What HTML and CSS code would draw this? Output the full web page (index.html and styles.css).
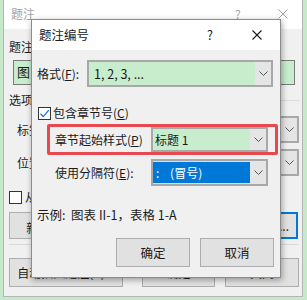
FILE: index.html
```html
<!DOCTYPE html>
<html lang="zh-CN">
<head>
<meta charset="utf-8">
<title>题注编号</title>
<link rel="stylesheet" href="styles.css">
</head>
<body>
<div class="desk">
  <div class="win back">
    <div class="tbar">
      <span class="ttl">题注</span>
      <span class="help">?</span>
      <svg class="close" width="10" height="10" viewBox="0 0 10 10"><path d="M0.5 0.5L9.5 9.5M9.5 0.5L0.5 9.5" stroke="#a0a0a0" stroke-width="1"/></svg>
    </div>
    <div class="bbody">
      <div class="blabel">题注</div>
      <div class="binput">图</div>
      <div class="bgroup"><span>选项</span><i class="gline"></i></div>
      <div class="brow"><span class="blab">标签</span><div class="bcombo"><span class="bval"></span><span class="arr"><svg width="9" height="5" viewBox="0 0 9 5"><path d="M0.5 0.5L4.5 4.5L8.5 0.5" fill="none" stroke="#555" stroke-width="1"/></svg></span></div></div>
      <div class="brow r2"><span class="blab">位置</span><div class="bcombo"><span class="bval"></span><span class="arr"><svg width="9" height="5" viewBox="0 0 9 5"><path d="M0.5 0.5L4.5 4.5L8.5 0.5" fill="none" stroke="#555" stroke-width="1"/></svg></span></div></div>
      <div class="bcheck"><span class="cb"></span><span>从题注中排除标签(E)</span></div>
      <div class="bbtns">
        <span class="btn b1">新建标签(N)...</span>
        <span class="btn b2"></span>
        <span class="btn b3 focus">编号(U)...</span>
      </div>
      <div class="sep"></div>
      <div class="bbtns2">
        <span class="btn c1">自动插入题注(A)...</span>
        <span class="btn c2">确定</span>
        <span class="btn c3">关闭</span>
      </div>
    </div>
  </div>

  <div class="win front">
    <div class="tbar ftbar">
      <span class="ttl fttl">题注编号</span>
      <span class="help fhelp">?</span>
      <svg class="close fclose" width="10" height="10" viewBox="0 0 10 10"><path d="M0.5 0.5L9.5 9.5M9.5 0.5L0.5 9.5" stroke="#1a1a1a" stroke-width="1.1"/></svg>
    </div>
    <div class="fbody">
      <div class="row1">
        <span class="lab1">格式(<u>F</u>):</span>
        <div class="combo c-fmt"><span class="val">1, 2, 3, ...</span><span class="arr"><svg width="9" height="5" viewBox="0 0 9 5"><path d="M0.5 0.5L4.5 4.5L8.5 0.5" fill="none" stroke="#555" stroke-width="1"/></svg></span></div>
      </div>
      <div class="chk">
        <span class="cbx"><svg width="11" height="11" viewBox="0 0 11 11"><path d="M1.5 5.8L4.3 8.6L9.8 2.2" fill="none" stroke="#1a73d9" stroke-width="1.3"/></svg></span>
        <span>包含章节号(<u>C</u>)</span>
      </div>
      <div class="redbox">
        <span class="lab2">章节起始样式(<u>P</u>)</span>
        <div class="combo c-sty"><span class="val">标题 1</span><span class="arr"><svg width="9" height="5" viewBox="0 0 9 5"><path d="M0.5 0.5L4.5 4.5L8.5 0.5" fill="none" stroke="#555" stroke-width="1"/></svg></span></div>
      </div>
      <div class="row3">
        <span class="lab2">使用分隔符(<u>E</u>):</span>
        <div class="combo c-sep"><span class="val sel">:&nbsp;&nbsp;&nbsp;&nbsp;(冒号)</span><span class="arr"><svg width="9" height="5" viewBox="0 0 9 5"><path d="M0.5 0.5L4.5 4.5L8.5 0.5" fill="none" stroke="#555" stroke-width="1"/></svg></span></div>
      </div>
      <div class="example"><span class="extext">示例:&nbsp;&nbsp;图表 II-1，表格 1-A</span></div>
      <div class="fbtns">
        <span class="btn fb">确定</span>
        <span class="btn fb">取消</span>
      </div>
    </div>
  </div>
</div>
</body>
</html>
```
FILE: styles.css
```css
* { box-sizing: border-box; }
html, body { margin: 0; padding: 0; }
body {
  width: 307px;
  height: 300px;
  overflow: hidden;
  background: #c7e8cb;
  font-family: "Noto Sans CJK SC", "Noto Sans", sans-serif;
  font-size: 12px;
  color: #1a1a1a;
}
u { text-decoration: underline; text-underline-offset: 1px; }
.desk { position: relative; width: 307px; height: 300px; }
.win { position: absolute; background: #f0f0f0; }

/* back dialog */
.back {
  left: 3px; top: -3px; width: 300px; height: 300px;
  border: 1px solid #b5b5b5;
  overflow: hidden;
}
.tbar {
  display: flex; align-items: center;
  background: #ffffff;
}
.back .tbar { height: 31px; padding-left: 7px; }
.ttl { flex: 1; line-height: 14px; }
.back .ttl { color: #a3a3a3; }
.back .help { color: #a3a3a3; width: 12px; margin-right: 31px; line-height: 14px; }
.back .close { margin-right: 14px; }

.bbody { padding: 0 0 0 5px; display: flex; flex-direction: column; }
.blabel { margin-top: 11px; height: 14px; line-height: 14px; }
.binput {
  margin: 6px 0 0 4px; width: 282px; height: 25px;
  border: 1px solid #7a7a7a; background: #c7edcc;
  padding-left: 3px; line-height: 22px; font-size: 13px;
}
.bgroup { display: flex; align-items: center; margin-top: 8px; height: 14px; line-height: 14px; }
.gline { flex: 1; height: 1px; background: #dcdcdc; margin-left: 6px; margin-right: 2px; }
.brow { display: flex; align-items: center; margin-top: 9px; padding-left: 8px; }
.brow.r2 { margin-top: 6px; }
.blab { width: 60px; line-height: 14px; }
.bcombo {
  display: flex; width: 216px; height: 27px; margin-left: auto; margin-right: 3px;
  border: 2px solid #a8a8a8; background: #c7edcc;
}
.bval { flex: 1; }
.arr { width: 16px; background: #e5e5e5; display: flex; align-items: center; justify-content: center; }
.bcheck { display: flex; align-items: center; margin-top: 14px; height: 14px; line-height: 14px; }
.cb { width: 13px; height: 13px; border: 1px solid #333; background: #fff; margin-right: 3px; }
.bbtns { display: flex; margin-top: 8px; gap: 8px; }
.btn {
  display: flex; align-items: center; justify-content: center;
  background: #e1e1e1; border: 1px solid #adadad; line-height: 13px; white-space: nowrap;
}
.bbtns .btn { height: 27px; }
.b1 { width: 110px; padding-top: 4px; line-height: 12px; }
.b2 { width: 60px; }
.b3 { width: 105px; margin-left: auto; margin-right: 4px; justify-content: flex-end; padding-right: 7px; }
.focus { border: 2px solid #0078d7; }
.sep { height: 1px; background: #d9d9d9; margin: 5px 4px 0 0; }
.bbtns2 { display: flex; margin-top: 13px; }
.bbtns2 .btn { height: 29px; }
.c1 { width: 114px; }
.c2 { width: 73px; margin-left: 19px; }
.c3 { width: 74px; margin-left: 10px; }

/* front dialog */
.front {
  left: 31px; top: 19px; width: 250px; height: 259px;
  border: 1px solid #8c8c8c;
  box-shadow: 1px 2px 6px rgba(0,0,0,0.35);
}
.ftbar { height: 30px; padding-left: 7px; }
.fttl { line-height: 14px; font-size: 12.5px; }
.fhelp { width: 10px; margin-right: 35px; line-height: 14px; font-size: 12.5px; }
.fclose { margin-right: 18px; }

.fbody { display: flex; flex-direction: column; padding-left: 5px; }
.row1 { display: flex; align-items: center; margin-top: 10px; }
.lab1 { width: 50px; line-height: 14px; }
.combo {
  display: flex; height: 27px;
  border: 2px solid #a8a8a8; background: #c7edcc;
}
.combo .val { flex: 1; display: flex; align-items: center; padding-left: 5px; white-space: nowrap; line-height: 14px; }
.c-fmt { width: 186px; }
.c-fmt .val { font-size: 12.5px; }
.chk { display: flex; align-items: center; margin-top: 17px; height: 18px; padding-left: 1px; line-height: 14px; }
.cbx {
  width: 13px; height: 13px; border: 1px solid #333; background: #fff;
  display: flex; align-items: center; justify-content: center; margin-right: 2px;
}
.redbox {
  display: flex; align-items: center;
  margin: 2px 0 0 10px; width: 231px; height: 31px;
  border: 3px solid #e8494e; border-radius: 2px;
  padding: 0 7px 0 5px;
}
.lab2 { width: 96px; white-space: nowrap; line-height: 14px; }
.c-sty, .c-sep { width: 117px; }
.c-sty { height: 25px; margin-left: auto; }
.c-sty .val { padding-left: 2px; }
.row3 { display: flex; align-items: center; margin: 4px 0 0 18px; }
.c-sep .val.sel {
  background: #0078d7; color: #fff; margin: 1px 0; padding-left: 3px;
}
.example { margin-top: 20px; height: 18px; display: flex; align-items: center; font-size: 12.5px; }
.extext { line-height: 12px; }
.fbtns { display: flex; justify-content: flex-end; gap: 10px; margin-top: 14px; margin-right: 6px; }
.fb { width: 74px; height: 29px; font-size: 12.5px; }
```
